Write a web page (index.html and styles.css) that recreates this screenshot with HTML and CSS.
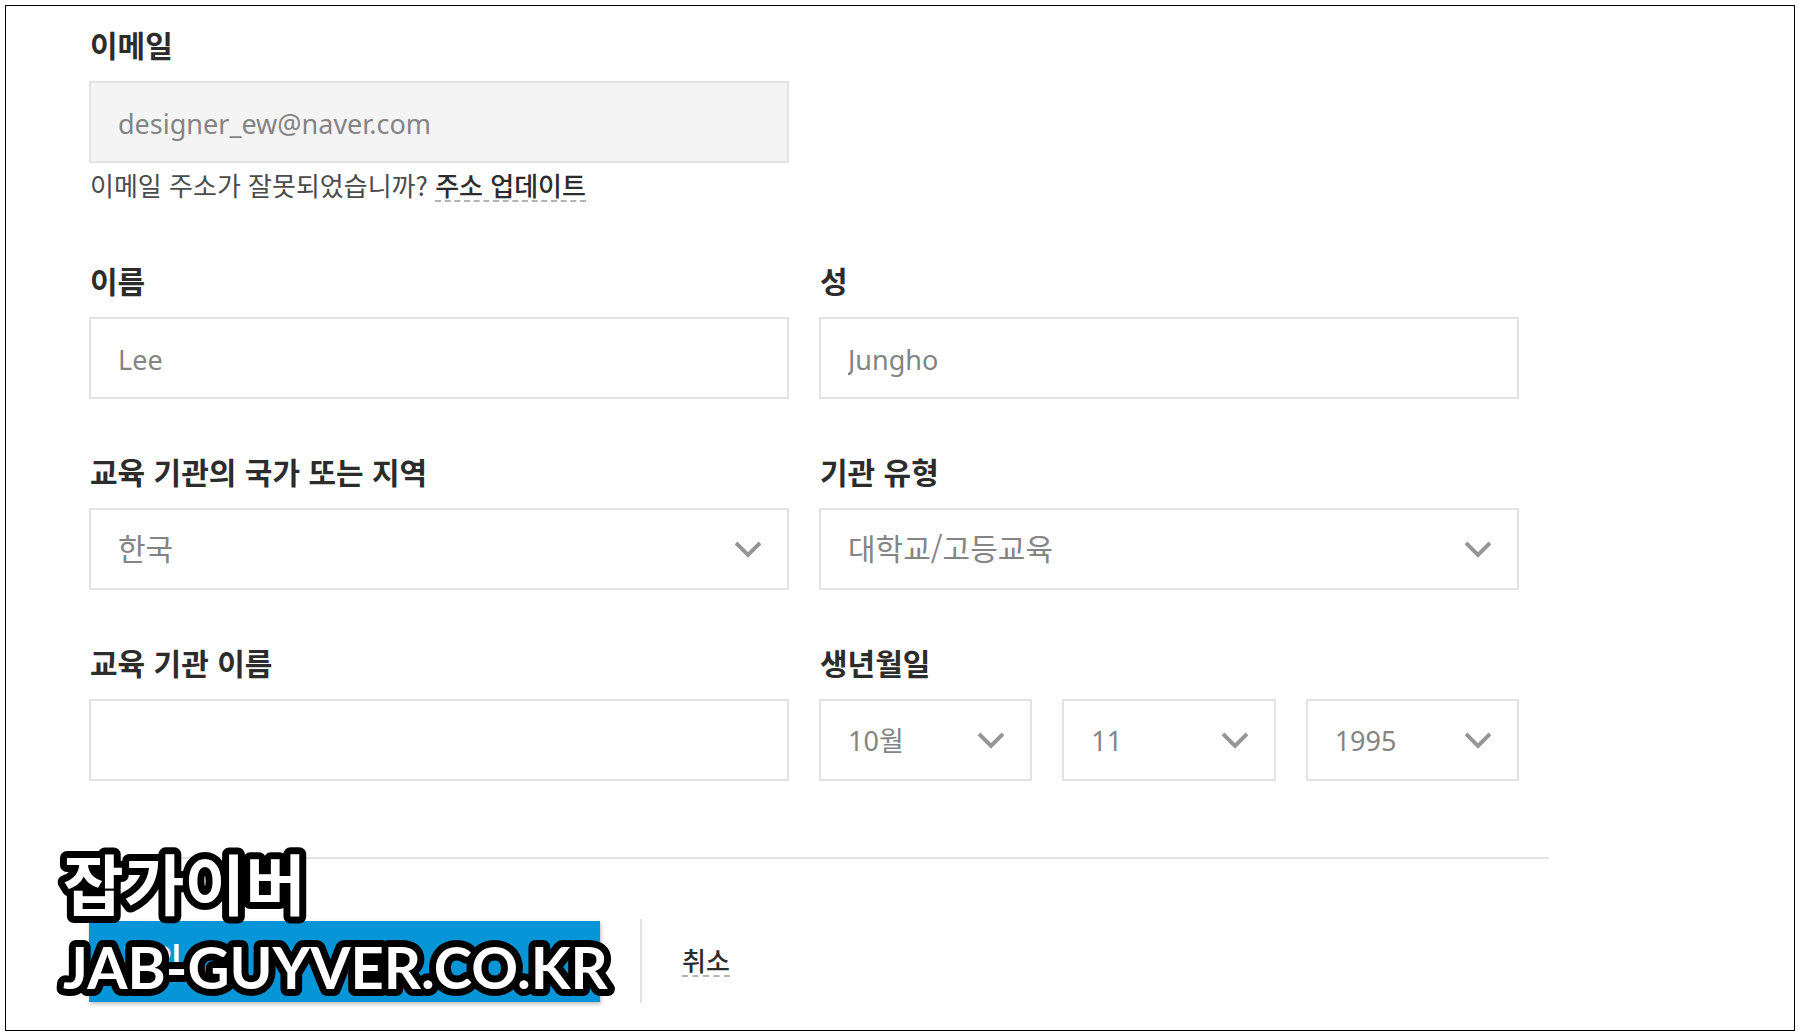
FILE: index.html
```html
<!DOCTYPE html>
<html lang="ko">
<head>
<meta charset="utf-8">
<meta name="viewport" content="width=device-width, initial-scale=1">
<title>이메일</title>
<link rel="stylesheet" href="styles.css">
</head>
<body>
<main class="frame">
  <form class="form">
    <div class="grid">
      <div class="field field-email">
        <label class="label" for="email">이메일</label>
        <input class="control" id="email" type="email" value="designer_ew@naver.com" readonly>
        <p class="hint">이메일 주소가 잘못되었습니까? <a class="link link-strong" href="#">주소 업데이트</a></p>
      </div>
      <div class="field first-column">
        <label class="label" for="first-name">이름</label>
        <input class="control" id="first-name" type="text" value="Lee">
      </div>
      <div class="field">
        <label class="label" for="last-name">성</label>
        <input class="control" id="last-name" type="text" value="Jungho">
      </div>
      <div class="field">
        <label class="label" for="country">교육 기관의 국가 또는 지역</label>
        <div class="select">
          <select class="control control-korean" id="country"><option>한국</option></select>
          <svg class="chevron" viewBox="0 0 26 18" aria-hidden="true"><path d="M1 2 13 14 25 2"/></svg>
        </div>
      </div>
      <div class="field">
        <label class="label" for="kind">기관 유형</label>
        <div class="select">
          <select class="control control-korean" id="kind"><option>대학교/고등교육</option></select>
          <svg class="chevron" viewBox="0 0 26 18" aria-hidden="true"><path d="M1 2 13 14 25 2"/></svg>
        </div>
      </div>
      <div class="field">
        <label class="label" for="school">교육 기관 이름</label>
        <input class="control" id="school" type="text">
      </div>
      <div class="field">
        <label class="label" for="month">생년월일</label>
        <div class="date">
          <div class="select">
            <select class="control" id="month"><option>10월</option></select>
            <svg class="chevron" viewBox="0 0 26 18" aria-hidden="true"><path d="M1 2 13 14 25 2"/></svg>
          </div>
          <div class="select">
            <select class="control" aria-label="일"><option>11</option></select>
            <svg class="chevron" viewBox="0 0 26 18" aria-hidden="true"><path d="M1 2 13 14 25 2"/></svg>
          </div>
          <div class="select">
            <select class="control" aria-label="년"><option>1995</option></select>
            <svg class="chevron" viewBox="0 0 26 18" aria-hidden="true"><path d="M1 2 13 14 25 2"/></svg>
          </div>
        </div>
      </div>
    </div>
    <div class="actions">
      <button class="submit" type="submit">확인</button>
      <div class="cancel"><a class="link" href="#">취소</a></div>
    </div>
  </form>
  <svg class="watermark" width="600" height="160" role="img" aria-label="잡가이버 JAB-GUYVER.CO.KR">
    <text x="9" y="64">잡가이버</text>
    <text class="watermark-site" x="9" y="143">JAB-GUYVER.CO.KR</text>
  </svg>
</main>
</body>
</html>
```
FILE: styles.css
```css
* {
  box-sizing: border-box;
}

body {
  margin: 0;
  padding: 5px;
  background: #fff;
  color: #2c2c2c;
  font-family: "Noto Sans", "Noto Sans CJK KR", sans-serif;
}

.frame {
  position: relative;
  min-height: calc(100vh - 10px);
  padding: 18px 244px 26px 83px;
  border: 1px solid #000;
}

.grid {
  display: grid;
  grid-template-columns: 1fr 1fr;
  gap: 52px 30px;
  max-width: 1430px;
}

.field {
  display: flex;
  flex-direction: column;
  min-width: 0;
}

.field-email {
  margin-bottom: 5px;
}

.first-column {
  grid-column-start: 1;
}

.label {
  height: 40px;
  margin-bottom: 17px;
  padding-left: 1px;
  font: 700 30px/40px "Noto Sans CJK KR", sans-serif;
}

.control {
  width: 100%;
  height: 82px;
  margin: 0;
  padding: 2px 27px 0;
  border: 2px solid #e3e3e3;
  border-radius: 0;
  outline: 0;
  background: #fff;
  color: #848484;
  font: 27px/40px "Noto Sans", "Noto Sans CJK KR", sans-serif;
  appearance: none;
}

.control:read-only:not(select) {
  background: #f4f4f4;
}

.control-korean {
  padding-top: 0;
  padding-bottom: 4px;
  font: 30px/40px "Noto Sans CJK KR", sans-serif;
}

.select {
  position: relative;
  flex: 1;
  min-width: 0;
}

select.control {
  display: block;
}

.chevron {
  position: absolute;
  top: 33px;
  right: 28px;
  width: 26px;
  height: 18px;
  fill: none;
  stroke: #969696;
  stroke-width: 4px;
  pointer-events: none;
}

.date {
  display: flex;
  gap: 30px;
}

.hint {
  margin: 4px 0 0;
  padding-left: 1px;
  color: #4b4b4b;
  font: 26px/36px "Noto Sans CJK KR", sans-serif;
}

.link {
  display: inline-block;
  border-bottom: 2px dashed #b4b4b4;
  color: #2c2c2c;
  line-height: 30px;
  text-decoration: none;
}

.link-strong {
  font-weight: 500;
}

.actions {
  display: flex;
  align-items: center;
  gap: 40px;
  max-width: 1460px;
  margin-top: 76px;
  margin-right: -30px;
  padding-top: 60px;
  border-top: 2px solid #e3e3e3;
}

.submit {
  width: 511px;
  height: 81px;
  padding: 0 34px 8px;
  border: 0;
  background: #0696d7;
  box-shadow: 1px 2px 4px #0004;
  color: #fff;
  font: 700 32px/40px "Noto Sans CJK KR", sans-serif;
  text-align: left;
}

.cancel {
  display: flex;
  align-items: center;
  height: 84px;
  padding-left: 40px;
  border-left: 2px solid #e3e3e3;
  font: 500 26px/36px "Noto Sans CJK KR", sans-serif;
}

.watermark {
  position: absolute;
  bottom: 24px;
  left: 48px;
  overflow: visible;
  fill: #fff;
  stroke: #000;
  stroke-width: 14px;
  stroke-linejoin: round;
  paint-order: stroke;
  font: 700 66px "Noto Sans CJK KR", sans-serif;
}

.watermark-site {
  font: 700 58px Lato, sans-serif;
}
```
